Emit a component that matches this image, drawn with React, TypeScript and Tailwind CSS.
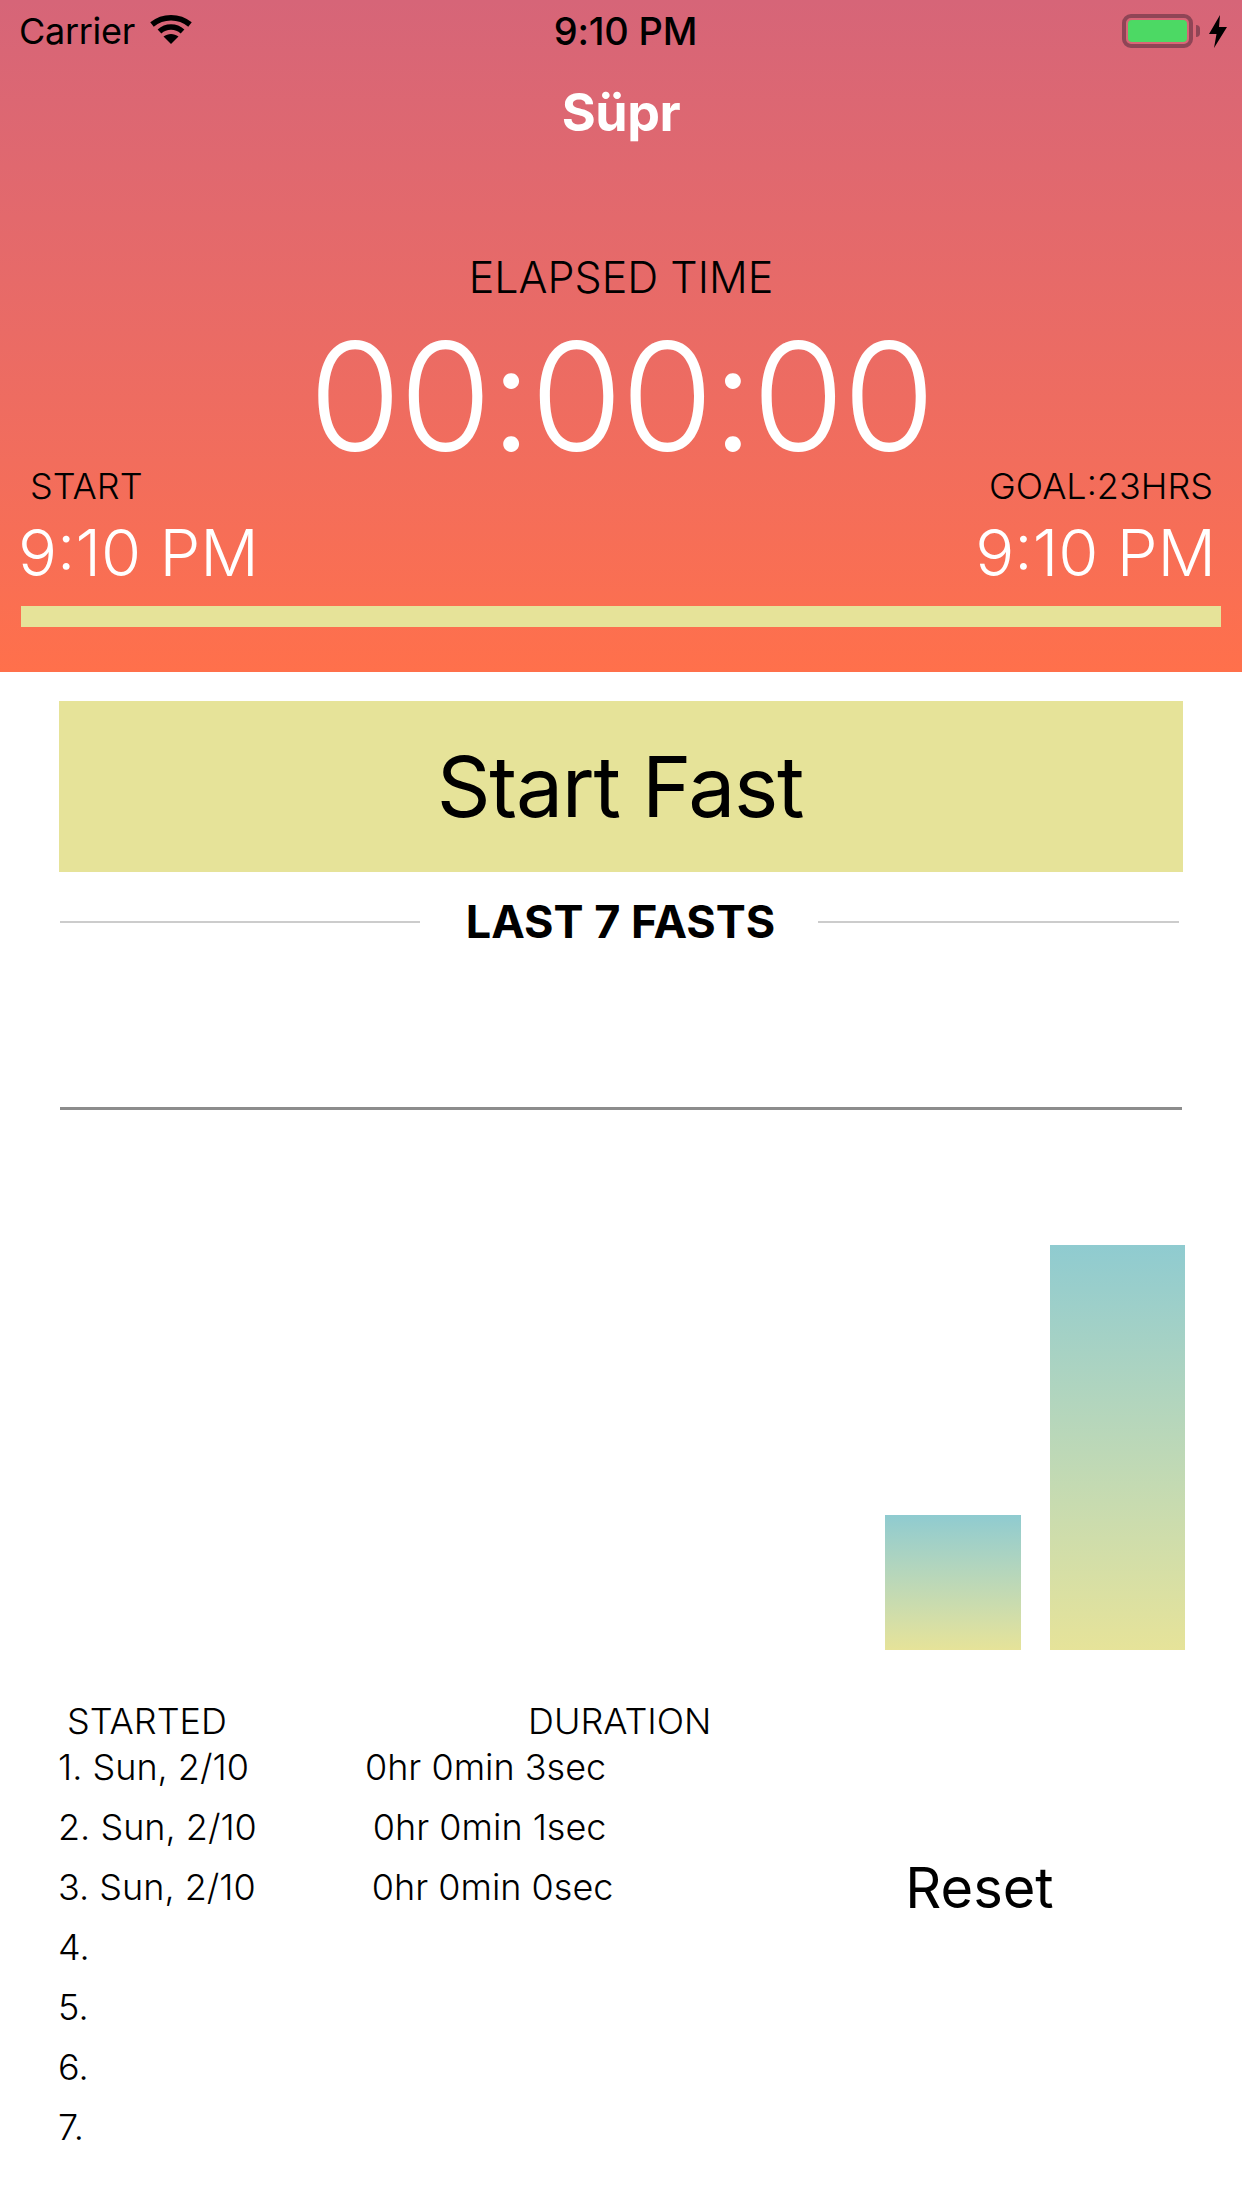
export default function App() {
  const rows = [
    ["1. Sun, 2/10", "0hr 0min 3sec"],
    ["2. Sun, 2/10", "0hr 0min 1sec"],
    ["3. Sun, 2/10", "0hr 0min 0sec"],
    ["4.", ""],
    ["5.", ""],
    ["6.", ""],
    ["7.", ""],
  ];
  return (
    <div className="w-[1242px] h-[2208px] bg-white text-black overflow-hidden font-['Inter',sans-serif]">
      <header className="h-[672px] flex flex-col bg-linear-to-b from-[#d66578] to-[#ff704b]">
        <div className="h-[62px] grid grid-cols-[1fr_auto_1fr] items-center pl-[19px] pr-[15px]">
          <div className="flex items-center gap-[15px]">
            <span className="text-[36px] leading-none tracking-[-0.3px]">Carrier</span>
            <svg width="42" height="30" viewBox="0 0 42 30" fill="none" className="mb-[2px]">
              <path d="M2 9.500 C13 0.500 29 0.500 40 9.500" stroke="#000" strokeWidth="5.500" strokeLinecap="butt" />
              <path d="M9.500 16.500 C16 10.500 26 10.500 32.500 16.500" stroke="#000" strokeWidth="5.500" />
              <path d="M21 29 L13.500 21.500 C18 18 24 18 28.500 21.500 Z" fill="#000" />
            </svg>
          </div>
          <span className="ml-[5px] text-[38px] font-medium leading-none tracking-[-0.2px]">9:10 PM</span>
          <div className="flex items-center justify-end">
            <div className="w-[71px] h-[34px] rounded-[9px] border-[4px] border-[#8f4556] p-[2px]">
              <div className="w-full h-full rounded-[4px] bg-[#4cd964]" />
            </div>
            <div className="w-[4px] h-[12px] ml-[3px] rounded-r-[4px] bg-[#8f4556]" />
            <svg width="18" height="33" viewBox="0 0 18 33" className="ml-[9px]">
              <path d="M11 0 L0 19 L7.500 19 L5 33 L18 12 L10 12 Z" fill="#000" />
            </svg>
          </div>
        </div>
        <div className="h-[102px] flex items-center justify-center text-white text-[52px] font-bold leading-none tracking-[-0.5px]">
          Süpr
        </div>
        <div className="mt-[93px] h-[40px] flex items-center justify-center text-[43px] font-light leading-none">
          ELAPSED TIME
        </div>
        <div className="mt-[30px] h-[140px] flex items-center justify-center text-white text-[150px] font-light leading-none tracking-[-2px]">
          00:00:00
        </div>
        <div className="h-[38px] flex items-center justify-between pl-[30px] pr-[29px] text-[36px] font-light leading-none">
          <span>START</span>
          <span>GOAL:23HRS</span>
        </div>
        <div className="mt-[17px] h-[60px] flex items-center justify-between pl-[18px] pr-[26px] text-white text-[65px] font-light leading-none">
          <span>9:10 PM</span>
          <span>9:10 PM</span>
        </div>
        <div className="mt-[24px] mx-[21px] h-[21px] bg-[#e6e399]" />
      </header>

      <main className="px-[59px]">
        <button className="mt-[29px] w-[1124px] h-[171px] pr-[2px] flex items-center justify-center bg-[#e6e399] text-[84px] leading-none tracking-[-1.300px]">
          Start Fast
        </button>
        <div className="mt-[30px] h-[40px] flex items-center pl-[1px] pr-[4px]">
          <div className="w-[360px] h-[2px] bg-[#cccccc]" />
          <span className="flex-1 pl-[3px] mb-[2px] text-center text-[45px] font-bold leading-none">LAST 7 FASTS</span>
          <div className="w-[361px] h-[2px] bg-[#cccccc]" />
        </div>
        <div className="mt-[165px] ml-[1px] w-[1122px] h-[3px] bg-[#8c8c8c]" />
        <div className="h-[540px] -mr-[2px] flex items-end justify-end gap-[29px]">
          <div className="w-[136px] h-[135px] bg-linear-to-b from-[#8fcbd0] to-[#e6e399]" />
          <div className="w-[135px] h-[405px] bg-linear-to-b from-[#8fcbd0] to-[#e6e399]" />
        </div>
        <div className="flex">
          <div className="w-[717px] pt-[54px] text-[36px] font-light leading-none">
            <div className="h-[33px] flex items-center pl-[8px]">
              <span className="w-[461px]">STARTED</span>
              <span>DURATION</span>
            </div>
            {rows.map(([a, b]) => (
              <div key={a} className="h-[60px] -ml-[1px] flex items-center gap-[116px]">
                <span>{a}</span>
                {b && <span>{b}</span>}
              </div>
            ))}
          </div>
          <div className="flex-1 pt-[208px] flex justify-center">
            <span className="h-[60px] flex items-center text-[56px] leading-none">Reset</span>
          </div>
        </div>
      </main>
    </div>
  );
}
